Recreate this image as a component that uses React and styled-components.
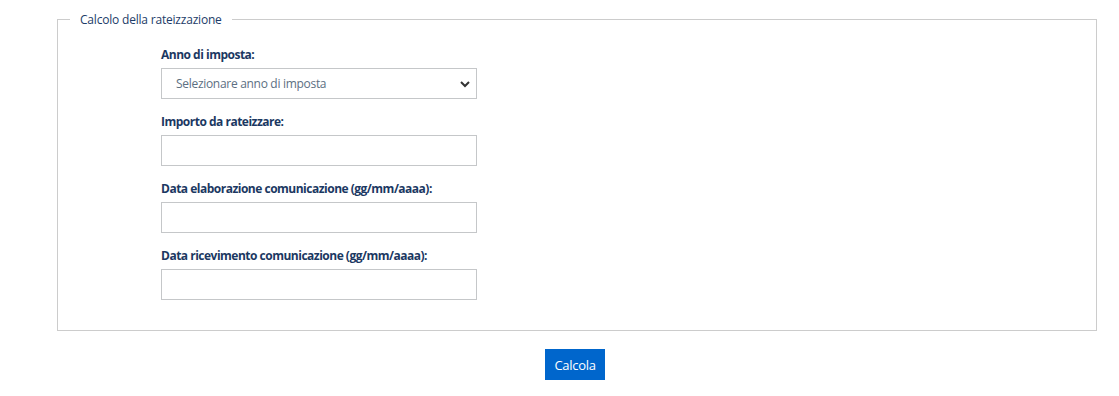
import React from 'react';
import styled, { createGlobalStyle } from 'styled-components';

const GlobalStyle = createGlobalStyle`
  body {
    margin: 0;
    background: #fff;
    font-family: "Open Sans", sans-serif;
  }
`;

const Page = styled.div`
  padding: 11px 0 0 57px;
  width: 1040px;
`;

const Fieldset = styled.fieldset`
  margin: 0;
  padding: 0;
  border: 1px solid #cccccc;
  min-width: 0;
`;

const Legend = styled.legend`
  margin-left: 12px;
  padding: 0 10px;
  font-size: 12px;
  letter-spacing: -0.2px;
  color: #1c3c68;
`;

const Body = styled.div`
  padding: 19px 0 30px 103px;
  display: flex;
  flex-direction: column;
  gap: 15px;
`;

const Field = styled.div`
  display: flex;
  flex-direction: column;
`;

const Label = styled.label`
  font-size: 12px;
  font-weight: 700;
  letter-spacing: -0.5px;
  color: #1b3862;
  line-height: 16px;
  margin-bottom: 5px;
`;

const Box = styled.div`
  position: relative;
  width: 316px;
  height: 31px;
  box-sizing: border-box;
  border: 1px solid #c5c7c9;
  background: #fff;
  display: flex;
  align-items: center;
  padding: 0 14px;
  font-size: 12px;
  letter-spacing: -0.3px;
  color: #5c6f82;
`;

const Input = styled.input`
  width: 316px;
  height: 31px;
  box-sizing: border-box;
  border: 1px solid #c5c7c9;
  margin: 0;
  padding: 0 10px;
  font: inherit;
  outline: none;
`;

const Chevron = styled.svg`
  position: absolute;
  right: 6px;
  top: 11px;
`;

const Actions = styled.div`
  display: flex;
  justify-content: center;
  padding-top: 18px;
  padding-right: 4px;
`;

const Button = styled.button`
  background: #0066cc;
  color: #fff;
  border: none;
  height: 31px;
  padding: 0 9px;
  font-family: inherit;
  font-size: 13px;
  letter-spacing: -0.3px;
`;

const fields = [
  'Importo da rateizzare:',
  'Data elaborazione comunicazione (gg/mm/aaaa):',
  'Data ricevimento comunicazione (gg/mm/aaaa):',
];

export default function App() {
  return (
    <Page>
      <GlobalStyle />
      <Fieldset>
        <Legend>Calcolo della rateizzazione</Legend>
        <Body>
          <Field>
            <Label>Anno di imposta:</Label>
            <Box>
              Selezionare anno di imposta
              <Chevron width="10" height="8" viewBox="0 0 10 8">
                <path d="M1 2l4 4 4-4" fill="none" stroke="#333" strokeWidth="2" />
              </Chevron>
            </Box>
          </Field>
          {fields.map((f) => (
            <Field key={f}>
              <Label>{f}</Label>
              <Input type="text" />
            </Field>
          ))}
        </Body>
      </Fieldset>
      <Actions>
        <Button>Calcola</Button>
      </Actions>
    </Page>
  );
}
